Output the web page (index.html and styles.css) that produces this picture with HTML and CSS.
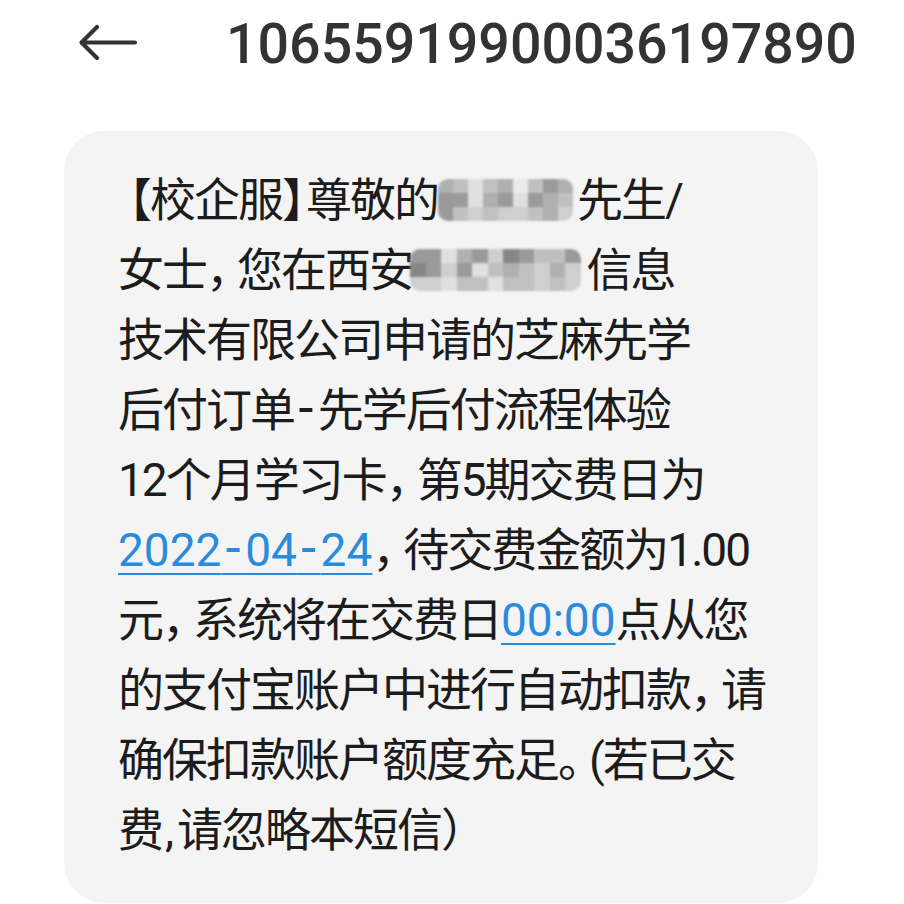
FILE: index.html
```html
<!DOCTYPE html>
<html lang="zh-CN">
<head>
  <meta charset="UTF-8" />
  <meta name="viewport" content="width=device-width, initial-scale=1.0"/>
  <title>短信</title>
  <link rel="stylesheet" href="styles.css">
</head>
<body>

<!-- Header -->
<div class="top-bar">
  <span class="back">
    <svg width="60" height="40" viewBox="0 0 60 40">
      <path d="M57 18.5 H5 M19 3 L3.5 18.5 L19 34" fill="none" stroke="#333" stroke-width="4.2" stroke-linecap="round" stroke-linejoin="round"/>
    </svg>
  </span>
  <h1 class="sender">10655919900036197890</h1>
</div>

<!-- Message -->
<div class="bubble">
  <p class="msg">
    <span class="open">【</span>校企服<span class="close">】</span>尊敬的<span class="mosaic m-name">
      <i class="g2"></i><i class="g3"></i><i class="g5"></i><i class="g3"></i><i class="g2"></i><i class="g6"></i><i class="g3"></i><i class="g1"></i><i class="g2"></i>
      <i class="g1"></i><i class="g1"></i><i class="g5"></i><i class="g2"></i><i class="g1"></i><i class="g5"></i><i class="g1"></i><i class="g2"></i><i class="g3"></i>
      <i class="g1"></i><i class="g3"></i><i class="g4"></i><i class="g3"></i><i class="g4"></i><i class="g4"></i><i class="g3"></i><i class="g2"></i><i class="g4"></i>
    </span>先生/<br>
    女士<span class="p">，</span>您在西安<span class="mosaic m-company">
      <i class="g1"></i><i class="g1"></i><i class="g5"></i><i class="g2"></i><i class="g1"></i><i class="g4"></i><i class="g0"></i><i class="g1"></i><i class="g3"></i><i class="g3"></i><i class="g1"></i>
      <i class="g0"></i><i class="g1"></i><i class="g4"></i><i class="g1"></i><i class="g5"></i><i class="g3"></i><i class="g2"></i><i class="g3"></i><i class="g4"></i><i class="g2"></i><i class="g4"></i>
      <i class="g4"></i><i class="g4"></i><i class="g5"></i><i class="g3"></i><i class="g3"></i><i class="g5"></i><i class="g3"></i><i class="g3"></i><i class="g4"></i><i class="g3"></i><i class="g4"></i>
    </span>信息<br>
    技术有限公司申请的芝麻先学<br>
    后付订单<span class="dash"> - </span>先学后付流程体验<br>
    12个月学习卡<span class="p">，</span>第5期交费日为<br>
    <a class="link">2022<span class="dash"> - </span>04<span class="dash"> - </span>24</a><span class="p">，</span>待交费金额为1.00<br>
    元<span class="p">，</span>系统将在交费日<a class="link">00:00</a>点从您<br>
    的支付宝账户中进行自动扣款<span class="p">，</span>请<br>
    确保扣款账户额度充足<span class="p">。</span>(若已交<br>
    费<span class="comma">,</span>请忽略本短信<span class="paren">）</span>
  </p>
</div>

</body>
</html>
```

FILE: styles.css
```css
:root {
  --text: #1c1c1c;
  --title: #333;
  --bubble: #f4f4f4;
  --link: #2a8bdc;
  --font: 'Roboto', 'Noto Sans CJK SC', sans-serif;
}

* {
  box-sizing: border-box;
  margin: 0;
  padding: 0;
}

body {
  background: #fff;
  font-family: var(--font);
  color: var(--text);
  width: 904px;
  height: 904px;
  overflow: hidden;
}

/* Header */
.top-bar {
  display: flex;
  align-items: center;
  height: 88px;
  padding-left: 78px;
}

.back {
  display: flex;
  width: 60px;
  margin-right: 88px;
}

.sender {
  font-size: 55.5px;
  font-weight: 500;
  color: var(--title);
}

/* Bubble */
.bubble {
  margin: 43px 0 0 64px;
  width: 754px;
  background: var(--bubble);
  border-radius: 40px;
  padding: 34px 20px 38px 54px;
}

.msg {
  font-size: 46px;
  line-height: 70px;
  letter-spacing: -2px;
  white-space: nowrap;
}

/* half-width punctuation, as the phone renders it */
.p {
  font-feature-settings: "halt";
  margin-right: 10px;
}

.open {
  font-feature-settings: "halt";
  margin-left: 11px;
}

.close {
  font-feature-settings: "halt";
  margin-right: 3px;
}

.paren {
  font-feature-settings: "halt";
}

.comma {
  margin: 0 5px 0 3px;
}

.dash {
  font-size: 54px;
  line-height: 1;
  letter-spacing: 0;
  word-spacing: -9px;
}

.link {
  color: var(--link);
  letter-spacing: 0;
  text-decoration: underline;
  text-decoration-thickness: 2px;
  text-underline-offset: 7px;
}

/* Mosaic over private text */
.mosaic {
  display: inline-grid;
  grid-auto-rows: 14px;
  vertical-align: middle;
  border-radius: 10px;
  overflow: hidden;
  filter: blur(0.8px);
  position: relative;
  top: -4px;
}

.m-name {
  grid-template-columns: repeat(9, 15px);
  margin: 0 4px 0 0;
}

.m-company {
  grid-template-columns: repeat(11, 15.5px);
  margin: 0 6px 0 -3px;
}

.mosaic i { display: block; }
.g0 { background: #868686; }
.g1 { background: #9a9a9a; }
.g2 { background: #b0b0b0; }
.g3 { background: #c0c0c0; }
.g4 { background: #cfcfcf; }
.g5 { background: #e0e0e0; }
.g6 { background: #ebebeb; }
```
